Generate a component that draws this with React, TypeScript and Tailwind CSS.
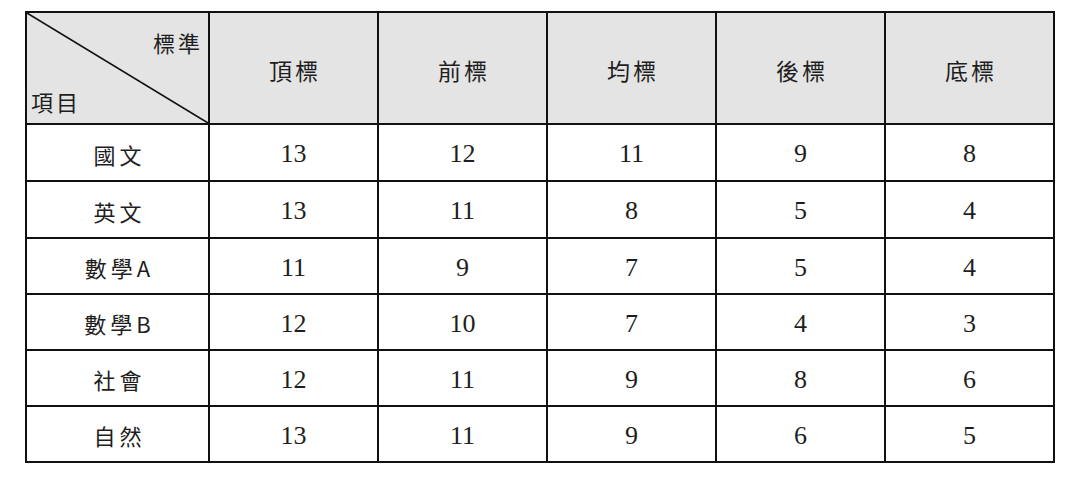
import React from 'react'

const cols = ['頂標', '前標', '均標', '後標', '底標']

const rows: { name: string; values: number[] }[] = [
  { name: '國文', values: [13, 12, 11, 9, 8] },
  { name: '英文', values: [13, 11, 8, 5, 4] },
  { name: '數學A', values: [11, 9, 7, 5, 4] },
  { name: '數學B', values: [12, 10, 7, 4, 3] },
  { name: '社會', values: [12, 11, 9, 8, 6] },
  { name: '自然', values: [13, 11, 9, 6, 5] },
]

const cjk = "font-['Noto_Sans_CJK_TC','Noto_Sans_CJK_SC',sans-serif]"

function App() {
  return (
    <div className="bg-white w-[1080px] h-[482px] pt-[11px] pl-[25px]">
      <div className="grid w-[1030px] grid-cols-[181px_repeat(5,167px)] grid-rows-[110px_55px_55px_54px_54px_54px_54px] gap-[2px] bg-[#111] p-[2px] text-[#1e1e1e]">
        {/* corner header cell */}
        <div className={`relative bg-[#e4e4e4] ${cjk} text-[22px]`}>
          <svg className="absolute inset-0 h-full w-full" viewBox="0 0 181 110" preserveAspectRatio="none">
            <line x1="0" y1="0" x2="181" y2="110" stroke="#111" strokeWidth="1.6" />
          </svg>
          <span className="absolute right-[5px] top-[18px] tracking-[3px] leading-none">標準</span>
          <span className="absolute left-[4px] bottom-[11px] tracking-[3px] leading-none">項目</span>
        </div>
        {cols.map((c) => (
          <div key={c} className={`flex items-center justify-center bg-[#e4e4e4] ${cjk} text-[23px] tracking-[3px] pl-[3px] pt-[4px]`}>
            {c}
          </div>
        ))}

        {rows.map((r) => (
          <React.Fragment key={r.name}>
            <div className={`flex items-center justify-center bg-white ${cjk} text-[22px] tracking-[4px] pl-[4px] pt-[3px]`}>
              {r.name}
            </div>
            {r.values.map((v, i) => (
              <div key={i} className="flex items-center justify-center bg-white font-['Liberation_Serif',serif] text-[26px] pt-[2px]">
                {v}
              </div>
            ))}
          </React.Fragment>
        ))}
      </div>
    </div>
  )
}

export default App
